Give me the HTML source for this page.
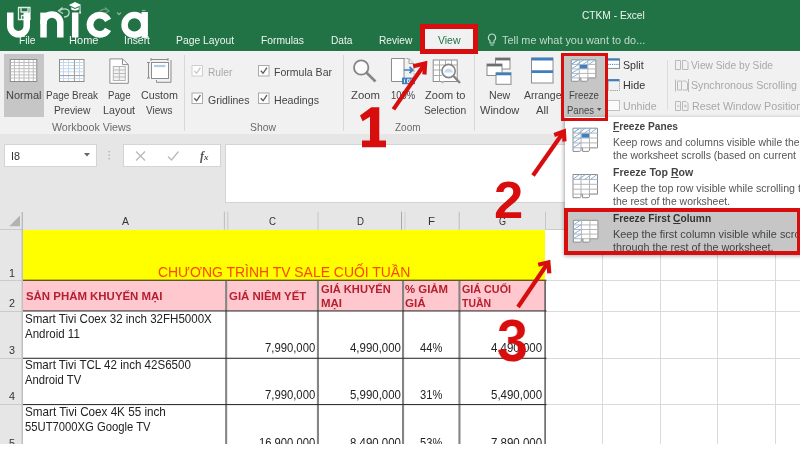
<!DOCTYPE html>
<html><head><meta charset="utf-8">
<style>
*{margin:0;padding:0;box-sizing:border-box}
html,body{width:800px;height:450px;overflow:hidden;background:#fff}
body{font-family:"Liberation Sans",sans-serif;position:relative}
#root{position:absolute;left:0;top:0;width:800px;height:450px;overflow:hidden;filter:blur(0.5px)}
.a{position:absolute;white-space:pre}
svg{position:absolute;overflow:visible}
</style></head><body><div id="root">
<!-- title bar -->
<div class="a" style="left:0;top:0;width:800px;height:51.5px;background:#217346"></div>
<!-- QAT icons (faint) -->
<svg style="left:0;top:0" width="160" height="50" fill="none" stroke="#dfeee6" stroke-width="1.3">
<path d="M18.5 7.5 H30 V19.5 H18.5 Z M21 7.5 V12 H28 V7.5 M21.5 19 V15.5 H26 V19" />
<path d="M59 11 C64 7 70 9 69 13.5 C68.5 16 66 17 64 17 M62.5 7.5 L58.5 11 L63 13.5" opacity=".8"/>
<path d="M100 11 C104 8 109 9 109 12 M105 7.5 L109 11 L105 13" opacity=".35"/>
<path d="M117 12.5 L119 14.5 L121 12.5" opacity=".5"/>
<path d="M142 10.5 H145.5" opacity=".5"/>
</svg>
<!-- view tab -->
<div class="a" style="left:423px;top:27px;width:53px;height:25px;background:#f1f1f1"></div>
<!-- lightbulb -->
<svg style="left:486.6px;top:32.6px" width="10" height="14" fill="none" stroke="#c2dacc" stroke-width="1.1"><path d="M5 1 a3.6 3.6 0 0 1 2 6.6 V10 H3 V7.6 A3.6 3.6 0 0 1 5 1 Z M3.3 12 H6.7"/></svg>
<!-- ribbon -->
<div class="a" style="left:0;top:51px;width:800px;height:83px;background:#f1f1f1"></div>
<div class="a" style="left:3.5px;top:54px;width:40.5px;height:63px;background:#c6c6c6"></div>
<div class="a" style="left:563px;top:55px;width:44px;height:64px;background:#c6c6c6"></div>
<div class="a" style="left:184px;top:55px;width:1px;height:76px;background:#d8d8d8"></div>
<div class="a" style="left:342.5px;top:55px;width:1px;height:76px;background:#d8d8d8"></div>
<div class="a" style="left:473.5px;top:55px;width:1px;height:76px;background:#d8d8d8"></div>
<div class="a" style="left:667px;top:60px;height:50px;width:1px;background:#dcdcdc"></div>

<svg style="left:0;top:0" width="800" height="140" fill="none" stroke-width="1">
<!-- Normal -->
<g><rect x="10.25" y="59.5" width="26.5" height="22" fill="#fff" stroke="#8c8c8c"/>
<path d="M10.5 62.5 H36.5 M10.5 65.6 H36.5 M10.5 68.7 H36.5 M10.5 71.8 H36.5 M10.5 74.9 H36.5 M10.5 78 H36.5 M14.5 60 V81 M19.2 60 V81 M24 60 V81 M28.8 60 V81 M33.3 60 V81" stroke="#bdbdbd" stroke-width="1"/></g>
<!-- Page Break -->
<g><rect x="59.5" y="59.5" width="24.5" height="22" fill="#fff" stroke="#8c8c8c"/>
<path d="M60 62.5 H84 M60 65.6 H84 M60 68.7 H84 M60 71.8 H84 M60 78.6 H84 M63.5 60 V81 M68.5 60 V81 M79.5 60 V81" stroke="#c3d8ee" stroke-width="1"/>
<path d="M74.4 60 V81 M60 75.6 H84" stroke="#9a9a9a" stroke-width="1"/></g>
<!-- Page Layout -->
<g><path d="M109.9 58.9 H122.5 L128.3 64.6 V83.3 H109.9 Z" fill="#fff" stroke="#8c8c8c"/><path d="M122.5 58.9 V64.6 H128.3" stroke="#8c8c8c"/>
<rect x="113.3" y="66.5" width="12" height="14" fill="#f4f4f4" stroke="#b4b4b4"/><path d="M113.3 70 H125.3 M113.3 73.5 H125.3 M113.3 77 H125.3 M119.3 66.5 V80.5" stroke="#b9b9b9"/></g>
<!-- Custom Views -->
<g stroke="#8c8c8c"><path d="M151 59.5 H168 M151 58 V61 M168 58 V61 M148.5 62.5 V78 M147 62.5 H150 M147 78 H150 M171 60 V82.3 H156.5 V80"/><rect x="151.5" y="62.5" width="17" height="16" fill="#fff"/><path d="M154 66 H165.5" stroke="#aecbe8" stroke-width="2.2"/></g>
<!-- Zoom -->
<g stroke="#858585" stroke-width="1.8"><circle cx="361.2" cy="67.5" r="7.2" fill="#fbfbfb"/><path d="M366.6 72.8 L375.5 81.5" stroke-width="2.6"/></g>
<!-- 100% -->
<g><path d="M391.5 58.5 H404 V81.5 H391.5 Z" fill="#fff" stroke="#8c8c8c"/><path d="M404 58.5 H409 L414 63.5 V77" stroke="#9a9a9a" stroke-dasharray="1.5 1.2"/><path d="M409 58.5 V63.5 H414" stroke="#9a9a9a"/>
<path d="M404 70 H412 M409.5 67 L412.8 70 L409.5 73" stroke="#3f7fbf" stroke-width="1.7"/><rect x="402" y="77.6" width="13" height="6.6" fill="#3f7fbf"/><path d="M404.5 79.3 V82.8 M407.5 79.3 h1.8 v3.3 h-1.8 Z M411 79.3 h1.8 v3.3 h-1.8 Z" stroke="#fff" stroke-width=".8"/></g>
<!-- Zoom to Selection -->
<g><rect x="433.2" y="60" width="24" height="21.5" fill="#fff" stroke="#8c8c8c"/><path d="M433.2 65 H457 M433.2 70 H442 M433.2 75.5 H442 M439.5 60 V81.5 M445.5 60 V66 M451.5 60 V66" stroke="#a9a9a9"/>
<path d="M441 81.5 q1.5 2.5 3 0" stroke="#8c8c8c" fill="#f1f1f1"/>
<circle cx="448.6" cy="71" r="6.6" fill="#fdfdfd" stroke="#858585" stroke-width="1.6"/><path d="M444.3 72.5 a4.3 4 0 0 1 8.6 0 Z" fill="#c6dbf0" stroke="none"/><path d="M453.5 76 L460 83" stroke="#858585" stroke-width="2.4"/></g>
<!-- New Window -->
<g stroke="#8c8c8c"><rect x="495.5" y="58" width="14.5" height="11" fill="#fff"/><path d="M495.5 59.2 H510" stroke="#6e6e6e" stroke-width="2.4"/>
<rect x="487" y="64" width="15" height="11.5" fill="#fff"/><path d="M487 65.2 H502" stroke="#6e6e6e" stroke-width="2.4"/>
<rect x="496" y="72.8" width="15" height="11.5" fill="#fff"/><path d="M496 74 H511" stroke="#3f7fbf" stroke-width="2.6"/></g>
<!-- Arrange All -->
<g stroke="#8c8c8c"><rect x="531.5" y="58" width="21.5" height="25" fill="#fff"/><path d="M531.5 59.2 H553 M531.5 71.6 H553" stroke="#3f7fbf" stroke-width="2.8"/></g>
<!-- Freeze Panes -->
<g transform="translate(571.3,59.9) scale(1,0.92)"><path d="M0 0 H24.5 V19.6 H16.5 V22.0 q-.3 1.2 -1.5 1.2 H9.6 V19.6 H8 V22.0 q-.3 1.2 -1.5 1.2 H0 Z" fill="#fff" stroke="#8c8c8c"/><path d="M0 4.9 H24.5 M0 9.8 H24.5 M0 14.7 H24.5 M0 19.6 H24.5 M8 0 V19.6 M16.5 0 V19.6" stroke="#b4b4b4"/><path d="M0 4.9 L6.5 0 M5.5 4.9 L12.5 0 M11.5 4.9 L18.5 0 M17.5 4.9 L24 0 M0 9.8 L8 4.6 M0 14.7 L8 9.5 M0 19.6 L8 14.4 M0 4.9 L7 0" stroke="#7fb0e0" stroke-width="1"/><rect x="8.6" y="5.4" width="7.4" height="4" fill="#3f7fbf" stroke="none"/></g>
<!-- Split / Hide / Unhide -->
<g transform="translate(-1.5,0)"><rect x="609" y="58.8" width="12" height="9.6" fill="#fff" stroke="#8c8c8c"/><path d="M609 59.6 H621" stroke="#3f7fbf" stroke-width="2"/><path d="M609 64.4 H621" stroke="#3f7fbf" stroke-dasharray="1.2 1"/>
<path d="M609 79.5 H621 M609.5 79.5 V90" stroke="#8c8c8c"/><path d="M609 80.3 H621" stroke="#3f7fbf" stroke-width="2"/><path d="M621 81 V90.5 H610" stroke="#9a9a9a" stroke-dasharray="1.2 1"/>
<rect x="609" y="100.5" width="12" height="10" fill="#fbfbfb" stroke="#c3c3c3"/></g>
<!-- side by side etc (disabled) -->
<g stroke="#b9b9b9"><path d="M675.5 60.5 H680.5 V69.5 H675.5 Z M682.5 60.5 H686 L688 62.5 V69.5 H682.5 Z"/>
<path d="M677.5 81 H681.5 V90 H677.5 Z M682.5 81 h3 l2 2 V90 H682.5 M675.5 79.5 V91.5 M688.5 79 V92"/>
<path d="M675.5 101.5 H680.5 V110.5 H675.5 Z M682.5 101.5 H686 L688 103.5 V110.5 H682.5 Z M677 106 H679.5 M684 106 H686.5 M685.2 104.7 V107.3"/></g>
</svg>
<svg style="left:597px;top:107.5px" width="5" height="4"><path d="M0 0 H4.4 L2.2 3 Z" fill="#555"/></svg>

<!-- checkboxes -->
<svg style="left:0;top:0" width="800" height="140" fill="#fdfdfd" stroke-width="1">
<g stroke="#cfcfcf"><rect x="192" y="65.5" width="10.5" height="10.5"/><path d="M194.3 70.8 L196.6 73.3 L200.4 67.6" fill="none" stroke="#c4c4c4" stroke-width="1.2"/></g>
<g stroke="#ababab"><rect x="258.5" y="65.5" width="10.5" height="10.5"/><rect x="192" y="93" width="10.5" height="10.5"/><rect x="258.5" y="93" width="10.5" height="10.5"/></g>
<g fill="none" stroke="#5a5a5a" stroke-width="1.3"><path d="M260.8 70.8 L263.1 73.3 L266.9 67.6"/><path d="M194.3 98.3 L196.6 100.8 L200.4 95.1"/><path d="M260.8 98.3 L263.1 100.8 L266.9 95.1"/></g>
</svg>
<!-- formula bar -->
<div class="a" style="left:0;top:134px;width:800px;height:96px;background:#e6e6e6"></div>
<div class="a" style="left:4px;top:144px;width:92.5px;height:22.5px;background:#fff;border:1px solid #d4d4d4"></div>
<svg style="left:84px;top:153px" width="7" height="4"><path d="M0 0 H6 L3 3.5 Z" fill="#666"/></svg>
<svg style="left:108px;top:150px" width="3" height="12" fill="#aaa"><rect x=".5" y="1" width="1.3" height="1.3"/><rect x=".5" y="4.5" width="1.3" height="1.3"/><rect x=".5" y="8" width="1.3" height="1.3"/></svg>
<div class="a" style="left:123px;top:144px;width:98px;height:22.5px;background:#fff;border:1px solid #d4d4d4"></div>
<svg style="left:0;top:0" width="230" height="170" fill="none" stroke="#b9b9b9" stroke-width="1.3"><path d="M136 151.5 L145 160.5 M145 151.5 L136 160.5"/><path d="M168 156.5 L171.5 160 L178.5 151.5"/></svg>
<div class="a" style="left:200px;top:148.5px;font-family:'Liberation Serif',serif;font-style:italic;font-weight:bold;font-size:12px;color:#555;line-height:14px;will-change:transform">f<span style="font-size:9px">x</span></div>
<div class="a" style="left:225px;top:144px;width:581px;height:58.5px;background:#fff;border:1px solid #d4d4d4"></div>
<!-- grid -->
<div class="a" style="left:0;top:230px;width:800px;height:214px;background:#fff"></div>
<div class="a" style="left:0;top:230px;width:22px;height:214px;background:#e6e6e6"></div>
<div class="a" style="left:23px;top:230px;width:522px;height:50.5px;background:#ffff00"></div>
<div class="a" style="left:23px;top:280.5px;width:522.5px;height:30.5px;background:#ffc7ce"></div>
<svg style="left:0;top:0" width="800" height="450" shape-rendering="crispEdges" fill="none" stroke-width="1">
<g stroke="#dadada"><path d="M602.5 230 V444 M660.5 230 V444 M717.5 230 V444 M775.5 230 V444 M546 280.5 H800 M546 311.5 H800 M546 358.5 H800 M546 404.5 H800"/></g>
<g stroke="#cbcbcb"><path d="M0 280.5 H22 M0 311.5 H22 M0 358.5 H22 M0 404.5 H22 M0 229.5 H22 M546 229.5 H800"/></g>
<g shape-rendering="auto" stroke="none"><rect x="21.7" y="212" width="1.1" height="232" fill="#b0b0b0"/>
<rect x="223.9" y="211.7" width="1" height="18" fill="#bdbdbd"/><rect x="227.3" y="211.7" width="1" height="18" fill="#c6c6c6"/>
<rect x="317.5" y="211.7" width="1" height="18" fill="#c6c6c6"/>
<rect x="401" y="211.7" width="1" height="18" fill="#a8a8a8"/><rect x="404.5" y="211.7" width="1" height="18" fill="#cfcfcf"/>
<rect x="458.7" y="211.7" width="1" height="18" fill="#bdbdbd"/><rect x="545" y="211.7" width="1" height="18" fill="#c6c6c6"/></g>
<g stroke="none" shape-rendering="auto"><g fill="#858585"><rect x="225.1" y="281" width="2.1" height="163"/><rect x="316.9" y="281" width="2.1" height="163"/><rect x="402" y="281" width="2.1" height="163"/><rect x="458.4" y="281" width="2.1" height="163"/><rect x="544.4" y="281" width="1.4" height="163" fill="#505050"/></g>
<g fill="#333"><rect x="23" y="279.7" width="523.5" height="1.1"/><rect x="23" y="310.4" width="523.5" height="1.1"/><rect x="23" y="357.75" width="523.5" height="1.1"/><rect x="23" y="404" width="523.5" height="1.1"/></g></g>
</svg>
<svg style="left:0;top:0" width="30" height="240"><path d="M20 215.5 V226.2 H9.3 Z" fill="#b2b2b2"/></svg>
<!-- dropdown -->
<div class="a" style="left:564.5px;top:117px;width:240px;height:137.5px;background:#fff;box-shadow:-1px 1px 4px rgba(0,0,0,.35)"></div>
<div class="a" style="left:565px;top:209px;width:236px;height:45px;background:#c6c6c6"></div>
<svg style="left:0;top:0" width="800" height="260" fill="none" stroke-width="1">
<g transform="translate(573,128.2)"><path d="M0 0 H24.5 V19.6 H16.5 V22.0 q-.3 1.2 -1.5 1.2 H9.6 V19.6 H8 V22.0 q-.3 1.2 -1.5 1.2 H0 Z" fill="#fff" stroke="#8c8c8c"/><path d="M0 4.9 H24.5 M0 9.8 H24.5 M0 14.7 H24.5 M0 19.6 H24.5 M8 0 V19.6 M16.5 0 V19.6" stroke="#b4b4b4"/><path d="M0 4.9 L6.5 0 M5.5 4.9 L12.5 0 M11.5 4.9 L18.5 0 M17.5 4.9 L24 0 M0 9.8 L8 4.6 M0 14.7 L8 9.5 M0 19.6 L8 14.4 M0 4.9 L7 0" stroke="#7fb0e0" stroke-width="1"/><rect x="8.6" y="5.4" width="7.4" height="4" fill="#3f7fbf" stroke="none"/></g>
<g transform="translate(573,174.5)"><path d="M0 0 H24.5 V19.6 H16.5 V22.0 q-.3 1.2 -1.5 1.2 H9.6 V19.6 H8 V22.0 q-.3 1.2 -1.5 1.2 H0 Z" fill="#fff" stroke="#8c8c8c"/><path d="M0 4.9 H24.5 M0 9.8 H24.5 M0 14.7 H24.5 M0 19.6 H24.5 M8 0 V19.6 M16.5 0 V19.6" stroke="#b4b4b4"/><path d="M0 4.9 L6.5 0 M5.5 4.9 L12.5 0 M11.5 4.9 L18.5 0 M17.5 4.9 L24 0 " stroke="#7fb0e0" stroke-width="1"/></g>
<g transform="translate(573.4,220.3) scale(1,0.94)"><path d="M0 0 H24.5 V19.6 H16.5 V22.0 q-.3 1.2 -1.5 1.2 H9.6 V19.6 H8 V22.0 q-.3 1.2 -1.5 1.2 H0 Z" fill="#fff" stroke="#8c8c8c"/><path d="M0 4.9 H24.5 M0 9.8 H24.5 M0 14.7 H24.5 M0 19.6 H24.5 M8 0 V19.6 M16.5 0 V19.6" stroke="#b4b4b4"/><path d="M0 9.8 L8 4.6 M0 14.7 L8 9.5 M0 19.6 L8 14.4 M0 4.9 L7 0" stroke="#7fb0e0" stroke-width="1"/></g>
</svg>
<div id="tx" style="position:absolute;left:0;top:0;width:800px;height:450px;will-change:transform;transform:translateZ(0)">
<div class="a" style="left:582.00px;top:9.13px;font-size:10.5px;line-height:12.07px;color:#eef5f1;transform:scaleX(0.9697);transform-origin:0 0;">CTKM - Excel</div>
<div class="a" style="left:18.50px;top:34.13px;font-size:10.5px;line-height:12.07px;color:#eef5f1;transform:scaleX(0.9751);transform-origin:0 0;">File</div>
<div class="a" style="left:68.50px;top:34.13px;font-size:10.5px;line-height:12.07px;color:#eef5f1;transform:scaleX(1.0530);transform-origin:0 0;">Home</div>
<div class="a" style="left:124.00px;top:34.13px;font-size:10.5px;line-height:12.07px;color:#eef5f1;transform:scaleX(0.9899);transform-origin:0 0;">Insert</div>
<div class="a" style="left:176.00px;top:34.13px;font-size:10.5px;line-height:12.07px;color:#eef5f1;transform:scaleX(0.9836);transform-origin:0 0;">Page Layout</div>
<div class="a" style="left:261.00px;top:34.13px;font-size:10.5px;line-height:12.07px;color:#eef5f1;transform:scaleX(0.9825);transform-origin:0 0;">Formulas</div>
<div class="a" style="left:331.00px;top:34.13px;font-size:10.5px;line-height:12.07px;color:#eef5f1;transform:scaleX(0.9690);transform-origin:0 0;">Data</div>
<div class="a" style="left:378.75px;top:34.13px;font-size:10.5px;line-height:12.07px;color:#eef5f1;transform:scaleX(0.9655);transform-origin:0 0;">Review</div>
<div class="a" style="left:438.00px;top:34.13px;font-size:10.5px;line-height:12.07px;color:#217346;transform:scaleX(0.9965);transform-origin:0 0;">View</div>
<div class="a" style="left:501.80px;top:34.13px;font-size:10.5px;line-height:12.07px;color:#c2dacc;transform:scaleX(1.0352);transform-origin:0 0;">Tell me what you want to do...</div>
<div class="a" style="left:5.50px;top:89.03px;font-size:10.5px;line-height:12.07px;color:#444;transform:scaleX(1.0489);transform-origin:0 0;">Normal</div>
<div class="a" style="left:46.00px;top:89.03px;font-size:10.5px;line-height:12.07px;color:#444;transform:scaleX(0.9476);transform-origin:0 0;">Page Break</div>
<div class="a" style="left:54.00px;top:103.53px;font-size:10.5px;line-height:12.07px;color:#444;transform:scaleX(0.9770);transform-origin:0 0;">Preview</div>
<div class="a" style="left:108.00px;top:89.03px;font-size:10.5px;line-height:12.07px;color:#444;transform:scaleX(0.9172);transform-origin:0 0;">Page</div>
<div class="a" style="left:103.40px;top:103.53px;font-size:10.5px;line-height:12.07px;color:#444;transform:scaleX(1.0180);transform-origin:0 0;">Layout</div>
<div class="a" style="left:141.00px;top:89.03px;font-size:10.5px;line-height:12.07px;color:#444;transform:scaleX(1.0225);transform-origin:0 0;">Custom</div>
<div class="a" style="left:146.00px;top:103.53px;font-size:10.5px;line-height:12.07px;color:#444;transform:scaleX(0.9523);transform-origin:0 0;">Views</div>
<div class="a" style="left:52.00px;top:120.83px;font-size:10.5px;line-height:12.07px;color:#6a6a6a;transform:scaleX(1.0153);transform-origin:0 0;">Workbook Views</div>
<div class="a" style="left:207.60px;top:66.03px;font-size:10.5px;line-height:12.07px;color:#a8a8a8;transform:scaleX(0.9724);transform-origin:0 0;">Ruler</div>
<div class="a" style="left:274.00px;top:66.03px;font-size:10.5px;line-height:12.07px;color:#444;transform:scaleX(1.0041);transform-origin:0 0;">Formula Bar</div>
<div class="a" style="left:207.60px;top:93.53px;font-size:10.5px;line-height:12.07px;color:#444;transform:scaleX(0.9991);transform-origin:0 0;">Gridlines</div>
<div class="a" style="left:274.00px;top:93.53px;font-size:10.5px;line-height:12.07px;color:#444;transform:scaleX(1.0141);transform-origin:0 0;">Headings</div>
<div class="a" style="left:250.00px;top:120.83px;font-size:10.5px;line-height:12.07px;color:#6a6a6a;transform:scaleX(0.9899);transform-origin:0 0;">Show</div>
<div class="a" style="left:350.50px;top:89.03px;font-size:10.5px;line-height:12.07px;color:#444;transform:scaleX(1.0803);transform-origin:0 0;">Zoom</div>
<div class="a" style="left:391.00px;top:89.03px;font-size:10.5px;line-height:12.07px;color:#444;transform:scaleX(0.8935);transform-origin:0 0;">100%</div>
<div class="a" style="left:424.50px;top:89.03px;font-size:10.5px;line-height:12.07px;color:#444;transform:scaleX(1.0515);transform-origin:0 0;">Zoom to</div>
<div class="a" style="left:423.75px;top:103.53px;font-size:10.5px;line-height:12.07px;color:#444;transform:scaleX(0.9779);transform-origin:0 0;">Selection</div>
<div class="a" style="left:395.00px;top:120.83px;font-size:10.5px;line-height:12.07px;color:#6a6a6a;transform:scaleX(0.9499);transform-origin:0 0;">Zoom</div>
<div class="a" style="left:488.75px;top:89.03px;font-size:10.5px;line-height:12.07px;color:#444;transform:scaleX(1.0112);transform-origin:0 0;">New</div>
<div class="a" style="left:479.50px;top:103.53px;font-size:10.5px;line-height:12.07px;color:#444;transform:scaleX(1.0506);transform-origin:0 0;">Window</div>
<div class="a" style="left:523.50px;top:89.03px;font-size:10.5px;line-height:12.07px;color:#444;transform:scaleX(1.0038);transform-origin:0 0;">Arrange</div>
<div class="a" style="left:536.00px;top:103.53px;font-size:10.5px;line-height:12.07px;color:#444;transform:scaleX(1.0710);transform-origin:0 0;">All</div>
<div class="a" style="left:568.60px;top:89.03px;font-size:10.5px;line-height:12.07px;color:#444;transform:scaleX(0.9147);transform-origin:0 0;">Freeze</div>
<div class="a" style="left:566.60px;top:103.53px;font-size:10.5px;line-height:12.07px;color:#444;transform:scaleX(0.9066);transform-origin:0 0;">Panes</div>
<div class="a" style="left:623.30px;top:58.53px;font-size:10.5px;line-height:12.07px;color:#333;transform:scaleX(1.0128);transform-origin:0 0;">Split</div>
<div class="a" style="left:623.30px;top:79.03px;font-size:10.5px;line-height:12.07px;color:#333;transform:scaleX(1.0273);transform-origin:0 0;">Hide</div>
<div class="a" style="left:623.30px;top:99.53px;font-size:10.5px;line-height:12.07px;color:#a8a8a8;transform:scaleX(1.0126);transform-origin:0 0;">Unhide</div>
<div class="a" style="left:691.00px;top:58.53px;font-size:10.5px;line-height:12.07px;color:#a8a8a8;transform:scaleX(0.9710);transform-origin:0 0;">View Side by Side</div>
<div class="a" style="left:691.00px;top:79.03px;font-size:10.5px;line-height:12.07px;color:#a8a8a8;transform:scaleX(1.0145);transform-origin:0 0;">Synchronous Scrolling</div>
<div class="a" style="left:691.80px;top:99.53px;font-size:10.5px;line-height:12.07px;color:#a8a8a8;transform:scaleX(1.0207);transform-origin:0 0;">Reset Window Position</div>
<div class="a" style="left:11.00px;top:150.03px;font-size:10.5px;line-height:12.07px;color:#333;transform:scaleX(1.0267);transform-origin:0 0;">I8</div>
<div class="a" style="left:121.50px;top:215.03px;font-size:10.5px;line-height:12.07px;color:#333;transform:scaleX(0.9978);transform-origin:0 0;">A</div>
<div class="a" style="left:269.00px;top:215.03px;font-size:10.5px;line-height:12.07px;color:#333;transform:scaleX(0.9218);transform-origin:0 0;">C</div>
<div class="a" style="left:356.50px;top:215.03px;font-size:10.5px;line-height:12.07px;color:#333;transform:scaleX(0.9218);transform-origin:0 0;">D</div>
<div class="a" style="left:427.50px;top:215.03px;font-size:10.5px;line-height:12.07px;color:#333;transform:scaleX(1.0900);transform-origin:0 0;">F</div>
<div class="a" style="left:499.00px;top:215.03px;font-size:10.5px;line-height:12.07px;color:#333;transform:scaleX(0.8566);transform-origin:0 0;">G</div>
<div class="a" style="left:8.50px;top:266.63px;font-size:10.5px;line-height:12.07px;color:#333;transform:scaleX(1.0267);transform-origin:0 0;">1</div>
<div class="a" style="left:8.50px;top:297.33px;font-size:10.5px;line-height:12.07px;color:#333;transform:scaleX(1.0267);transform-origin:0 0;">2</div>
<div class="a" style="left:8.50px;top:344.13px;font-size:10.5px;line-height:12.07px;color:#333;transform:scaleX(1.0267);transform-origin:0 0;">3</div>
<div class="a" style="left:8.50px;top:390.13px;font-size:10.5px;line-height:12.07px;color:#333;transform:scaleX(1.0267);transform-origin:0 0;">4</div>
<div class="a" style="left:8.50px;top:436.83px;font-size:10.5px;line-height:12.07px;color:#333;transform:scaleX(1.0267);transform-origin:0 0;">5</div>
<div class="a" style="left:157.80px;top:263.65px;font-size:14.6px;line-height:16.79px;color:#ff4500;transform:scaleX(0.9546);transform-origin:0 0;">CHƯƠNG TRÌNH TV SALE CUỐI TUẦN</div>
<div class="a" style="left:26.00px;top:289.86px;font-size:11px;line-height:12.65px;font-weight:bold;color:#b3202f;transform:scaleX(1.0388);transform-origin:0 0;">SẢN PHẨM KHUYẾN MẠI</div>
<div class="a" style="left:228.75px;top:289.86px;font-size:11px;line-height:12.65px;font-weight:bold;color:#b3202f;transform:scaleX(1.0387);transform-origin:0 0;">GIÁ NIÊM YẾT</div>
<div class="a" style="left:320.75px;top:282.86px;font-size:11px;line-height:12.65px;font-weight:bold;color:#b3202f;transform:scaleX(1.0100);transform-origin:0 0;">GIÁ KHUYẾN</div>
<div class="a" style="left:320.75px;top:296.86px;font-size:11px;line-height:12.65px;font-weight:bold;color:#b3202f;transform:scaleX(1.0411);transform-origin:0 0;">MẠI</div>
<div class="a" style="left:405.00px;top:282.86px;font-size:11px;line-height:12.65px;font-weight:bold;color:#b3202f;transform:scaleX(1.0346);transform-origin:0 0;">% GIẢM</div>
<div class="a" style="left:405.00px;top:296.86px;font-size:11px;line-height:12.65px;font-weight:bold;color:#b3202f;transform:scaleX(1.0607);transform-origin:0 0;">GIÁ</div>
<div class="a" style="left:462.00px;top:282.86px;font-size:11px;line-height:12.65px;font-weight:bold;color:#b3202f;transform:scaleX(0.9776);transform-origin:0 0;">GIÁ CUỐI</div>
<div class="a" style="left:462.00px;top:296.86px;font-size:11px;line-height:12.65px;font-weight:bold;color:#b3202f;transform:scaleX(0.9489);transform-origin:0 0;">TUẦN</div>
<div class="a" style="left:24.80px;top:312.02px;font-size:13px;line-height:14.95px;color:#222;transform:scaleX(0.8883);transform-origin:0 0;">Smart Tivi Coex 32 inch 32FH5000X</div>
<div class="a" style="left:24.80px;top:327.02px;font-size:13px;line-height:14.95px;color:#222;transform:scaleX(0.8850);transform-origin:0 0;">Android 11</div>
<div class="a" style="left:24.80px;top:358.22px;font-size:13px;line-height:14.95px;color:#222;transform:scaleX(0.8898);transform-origin:0 0;">Smart Tivi TCL 42 inch 42S6500</div>
<div class="a" style="left:24.80px;top:373.32px;font-size:13px;line-height:14.95px;color:#222;transform:scaleX(0.8673);transform-origin:0 0;">Android TV</div>
<div class="a" style="left:24.80px;top:404.82px;font-size:13px;line-height:14.95px;color:#222;transform:scaleX(0.8980);transform-origin:0 0;">Smart Tivi Coex 4K 55 inch</div>
<div class="a" style="left:24.80px;top:420.02px;font-size:13px;line-height:14.95px;color:#222;transform:scaleX(0.8661);transform-origin:0 0;">55UT7000XG Google TV</div>
<div class="a" style="left:264.90px;top:341.42px;font-size:13px;line-height:14.95px;color:#222;transform:scaleX(0.8679);transform-origin:0 0;">7,990,000</div>
<div class="a" style="left:350.00px;top:341.42px;font-size:13px;line-height:14.95px;color:#222;transform:scaleX(0.8800);transform-origin:0 0;">4,990,000</div>
<div class="a" style="left:419.50px;top:341.42px;font-size:13px;line-height:14.95px;color:#222;transform:scaleX(0.8567);transform-origin:0 0;">44%</div>
<div class="a" style="left:491.00px;top:341.42px;font-size:13px;line-height:14.95px;color:#222;transform:scaleX(0.8834);transform-origin:0 0;">4,490,000</div>
<div class="a" style="left:264.90px;top:388.42px;font-size:13px;line-height:14.95px;color:#222;transform:scaleX(0.8679);transform-origin:0 0;">7,990,000</div>
<div class="a" style="left:350.00px;top:388.42px;font-size:13px;line-height:14.95px;color:#222;transform:scaleX(0.8800);transform-origin:0 0;">5,990,000</div>
<div class="a" style="left:419.50px;top:388.42px;font-size:13px;line-height:14.95px;color:#222;transform:scaleX(0.8567);transform-origin:0 0;">31%</div>
<div class="a" style="left:491.00px;top:388.42px;font-size:13px;line-height:14.95px;color:#222;transform:scaleX(0.8834);transform-origin:0 0;">5,490,000</div>
<div class="a" style="left:258.90px;top:435.62px;font-size:13px;line-height:14.95px;color:#222;transform:scaleX(0.8636);transform-origin:0 0;">16,900,000</div>
<div class="a" style="left:350.00px;top:435.62px;font-size:13px;line-height:14.95px;color:#222;transform:scaleX(0.8800);transform-origin:0 0;">8,490,000</div>
<div class="a" style="left:419.50px;top:435.62px;font-size:13px;line-height:14.95px;color:#222;transform:scaleX(0.8567);transform-origin:0 0;">53%</div>
<div class="a" style="left:491.00px;top:435.62px;font-size:13px;line-height:14.95px;color:#222;transform:scaleX(0.8834);transform-origin:0 0;">7,890,000</div>
<div class="a" style="left:613.00px;top:120.33px;font-size:10.5px;line-height:12.07px;font-weight:bold;color:#444;transform:scaleX(0.9683);transform-origin:0 0;"><u>F</u>reeze Panes</div>
<div class="a" style="left:613.00px;top:135.63px;font-size:10.5px;line-height:12.07px;color:#555;transform:scaleX(0.9893);transform-origin:0 0;">Keep rows and columns visible while the</div>
<div class="a" style="left:613.00px;top:149.33px;font-size:10.5px;line-height:12.07px;color:#555;transform:scaleX(0.9986);transform-origin:0 0;">the worksheet scrolls (based on current</div>
<div class="a" style="left:612.50px;top:165.83px;font-size:10.5px;line-height:12.07px;font-weight:bold;color:#444;transform:scaleX(1.0058);transform-origin:0 0;">Freeze Top <u>R</u>ow</div>
<div class="a" style="left:612.50px;top:182.03px;font-size:10.5px;line-height:12.07px;color:#555;transform:scaleX(1.0124);transform-origin:0 0;">Keep the top row visible while scrolling</div>
<div class="a" style="left:797.50px;top:182.03px;font-size:10.5px;line-height:12.07px;color:#555;transform:scaleX(1.0267);transform-origin:0 0;">t</div>
<div class="a" style="left:612.50px;top:195.03px;font-size:10.5px;line-height:12.07px;color:#555;transform:scaleX(0.9923);transform-origin:0 0;">the rest of the worksheet.</div>
<div class="a" style="left:612.50px;top:212.03px;font-size:10.5px;line-height:12.07px;font-weight:bold;color:#333;transform:scaleX(0.9719);transform-origin:0 0;">Freeze First <u>C</u>olumn</div>
<div class="a" style="left:612.50px;top:228.03px;font-size:10.5px;line-height:12.07px;color:#444;transform:scaleX(1.0398);transform-origin:0 0;">Keep the first column visible while scro</div>
<div class="a" style="left:612.50px;top:240.63px;font-size:10.5px;line-height:12.07px;color:#444;transform:scaleX(1.0260);transform-origin:0 0;">through the rest of the worksheet.</div>
</div>
<!-- logo -->
<svg style="left:0;top:0" width="160" height="50" fill="none" stroke="#fff" stroke-width="6.5">
<path d="M10.25 12.5 V26 a8.25 8.25 0 0 0 16.5 0 V12.5"/>
<path d="M43.5 37.5 V22.9 a8.4 8.4 0 0 1 16.8 0 V37.5"/><path d="M43.5 24 V12.6" stroke-linejoin="round"/>
<path d="M75.2 12.5 V37.5"/>
<path d="M108.08 20.29 A9.6 9.6 0 1 0 108.08 29.31" stroke-width="6.8"/>
<circle cx="134.4" cy="24.9" r="9.85" stroke-width="6.5"/>
<path d="M144.7 12 V37.9" stroke-width="6.4"/>
<g stroke="none" fill="#fff"><path d="M75 2 L81.3 5 L75 8 L68.8 5 Z"/><path d="M71.2 7.2 V9.6 Q75 11.6 78.8 9.6 V7.2 L75 9 Z"/><path d="M79.6 5.8 h.9 V11 l.6 2.6 h-2.1 l.6 -2.6 Z"/></g>
</svg>
<!-- red annotations -->
<div class="a" style="left:420.3px;top:24.3px;width:57.7px;height:29.9px;border:5.4px solid #d80e0e"></div>
<div class="a" style="left:561.3px;top:53px;width:47.2px;height:67.5px;border:3.7px solid #d80e0e"></div>
<div class="a" style="left:564.3px;top:208.2px;width:237px;height:47.1px;border:4.7px solid #d80e0e"></div>
<svg style="left:0;top:0" width="800" height="450" fill="none" stroke="#d80e0e" stroke-width="4.2" stroke-linecap="butt" stroke-linejoin="miter">
<path d="M393.4 109.4 L425.1 63.5"/><path d="M413.2 66.2 L425.1 63.5 L424.4 74.5"/>
<path d="M533 175.5 L563.9 131.5"/><path d="M554.2 135 L563.9 131.5 L564.5 141.5"/>
<path d="M518 307 L548.4 262.3"/><path d="M538.2 264.8 L548.4 262.3 L549.3 273.3"/>
<path d="M379.3 107.2 H371.3 L360 115.5 L362.6 121.2 L370 116.8 V140.6 H362 V147.2 H386 V140.6 H379.3 Z" fill="#d80e0e" stroke="none"/>
</svg>
<div class="a" style="left:494.1px;top:174.2px;font-size:52.6px;font-weight:bold;color:#d80e0e;line-height:52.6px;will-change:transform">2</div>
<div class="a" style="left:497.3px;top:311.3px;font-size:59.4px;font-weight:bold;color:#d80e0e;line-height:59.4px;will-change:transform;transform:scaleX(0.935);transform-origin:0 0">3</div>
<!-- white bottom -->
<div class="a" style="left:0;top:444px;width:800px;height:6px;background:#fff"></div>
</div></body></html>
